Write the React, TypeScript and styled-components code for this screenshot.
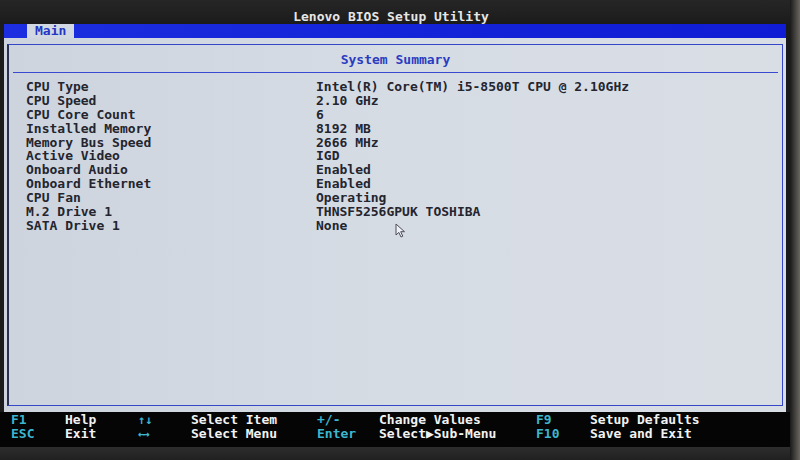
import React from "react";
import styled, { createGlobalStyle } from "styled-components";

interface InfoRow {
  label: string;
  value: string;
}

interface KeyHint {
  key: string;
  action: string;
}

const GlobalStyle = createGlobalStyle`
  html, body {
    margin: 0;
    padding: 0;
    background: #161616;
  }
  * {
    box-sizing: border-box;
  }
`;

const Screen = styled.div`
  position: relative;
  width: 800px;
  height: 460px;
  overflow: hidden;
  display: flex;
  flex-direction: column;
  background: linear-gradient(90deg, #1c1c1c 0%, #141414 60%, #1a1a1a 100%);
  font-family: "DejaVu Sans Mono", "Liberation Mono", monospace;
  font-size: 13px;
  font-weight: bold;
  line-height: 14px;
`;

const TitleBar = styled.div`
  height: 24px;
  padding-top: 10px;
  padding-right: 18px;
  text-align: center;
  color: #e6e6e6;
  background: linear-gradient(180deg, #262626 0%, #1b1b1b 100%);
`;

const Frame = styled.div`
  margin-left: 4px;
  width: 782px;
  display: flex;
  flex-direction: column;
`;

const TabBar = styled.div`
  height: 14px;
  display: flex;
  padding-left: 23px;
  background: linear-gradient(90deg, #1c2ee0 0%, #1424d8 50%, #0f1cd4 100%);
`;

const Tab = styled.div`
  width: 47px;
  height: 14px;
  padding-left: 8px;
  color: #2436c4;
  background: #d2d8e1;
`;

const Panel = styled.div`
  height: 374px;
  padding: 6px 3px 6px 3px;
  background: linear-gradient(90deg, #cdd4de 0%, #d6dce4 50%, #d9dee5 100%);
`;

const Box = styled.div`
  height: 100%;
  border: 1px solid #3646c8;
  border-left: 2px solid #2a3050;
  padding: 0 4px;
`;

const Header = styled.div`
  height: 28px;
  padding-top: 8px;
  text-align: center;
  color: #2a3cc0;
  border-bottom: 1px solid #3a4ad0;
`;

const InfoList = styled.div`
  padding-top: 7px;
  padding-left: 13px;
  display: flex;
  flex-direction: column;
`;

const Row = styled.div`
  display: grid;
  grid-template-columns: 290px auto;
  height: 13.9px;
  color: #24252e;
  white-space: pre;
`;

const Footer = styled.div`
  height: 35px;
  padding: 1px 0 0 11px;
  background: #050505;
  display: grid;
  grid-template-columns: 54px 73px 53px 126px 62px 157px 54px auto;
  grid-auto-rows: 14px;
`;

const KeyName = styled.span<{ $arrow?: "v" | "h" }>`
  color: #3cb6cf;
  white-space: pre;
  font-size: ${(p) => (p.$arrow ? "12px" : "13px")};
  letter-spacing: ${(p) => (p.$arrow === "h" ? "-3px" : "0")};
`;

const Action = styled.span`
  color: #f2f2f2;
  white-space: pre;
`;

const Bezel = styled.div`
  flex: 1;
  background: linear-gradient(180deg, #2e2e2e 0%, #202020 100%);
`;

const RightEdge = styled.div`
  position: absolute;
  top: 0;
  right: 0;
  width: 10px;
  height: 460px;
  background: linear-gradient(90deg, #1a1a1a 0%, #4a4844 60%, #6a6660 100%);
`;

const Cursor = styled.svg`
  position: absolute;
  left: 395px;
  top: 223px;
`;

const rows: InfoRow[] = [
  { label: "CPU Type", value: "Intel(R) Core(TM) i5-8500T CPU @ 2.10GHz" },
  { label: "CPU Speed", value: "2.10 GHz" },
  { label: "CPU Core Count", value: "6" },
  { label: "Installed Memory", value: "8192 MB" },
  { label: "Memory Bus Speed", value: "2666 MHz" },
  { label: "Active Video", value: "IGD" },
  { label: "Onboard Audio", value: "Enabled" },
  { label: "Onboard Ethernet", value: "Enabled" },
  { label: "CPU Fan", value: "Operating" },
  { label: "M.2 Drive 1", value: "THNSF5256GPUK TOSHIBA" },
  { label: "SATA Drive 1", value: "None" },
];

const hints: KeyHint[] = [
  { key: "F1", action: "Help" },
  { key: "↑↓", action: "Select Item" },
  { key: "+/-", action: "Change Values" },
  { key: "F9", action: "Setup Defaults" },
  { key: "ESC", action: "Exit" },
  { key: "←→", action: "Select Menu" },
  { key: "Enter", action: "Select▶Sub-Menu" },
  { key: "F10", action: "Save and Exit" },
];

const arrowKind = (key: string): "v" | "h" | undefined =>
  key === "↑↓" ? "v" : key === "←→" ? "h" : undefined;

export default function App(): React.JSX.Element {
  return (
    <Screen>
      <GlobalStyle />
      <TitleBar>Lenovo BIOS Setup Utility</TitleBar>
      <Frame>
        <TabBar>
          <Tab>Main</Tab>
        </TabBar>
        <Panel>
          <Box>
            <Header>System Summary</Header>
            <InfoList>
              {rows.map((row) => (
                <Row key={row.label}>
                  <span>{row.label}</span>
                  <span>{row.value}</span>
                </Row>
              ))}
            </InfoList>
          </Box>
        </Panel>
      </Frame>
      <Footer>
        {hints.map((h) => (
          <React.Fragment key={h.key}>
            <KeyName $arrow={arrowKind(h.key)}>{h.key}</KeyName>
            <Action>{h.action}</Action>
          </React.Fragment>
        ))}
      </Footer>
      <Bezel />
      <RightEdge />
      <Cursor width="12" height="15" viewBox="0 0 12 15">
        <path
          d="M1 1 L1 12 L3.8 9.4 L6 14 L7.8 13.2 L5.7 8.7 L9.5 8.7 Z"
          fill="#eef1f5"
          stroke="#4a4c55"
          strokeWidth="1"
          strokeLinejoin="round"
        />
      </Cursor>
    </Screen>
  );
}
